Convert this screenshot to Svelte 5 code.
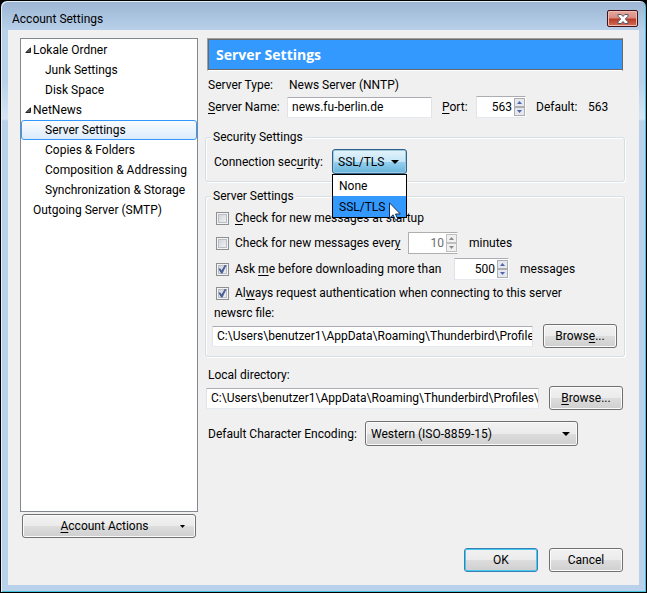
<script>
  let serverName = $state('news.fu-berlin.de');
  let port = $state('563');
  let security = $state('SSL/TLS');
  let interval = $state('10');
  let limit = $state('500');
  let checkStartup = $state(false);
  let checkEvery = $state(false);
  let askBefore = $state(true);
  let alwaysAuth = $state(true);
  let newsrc = $state('C:\\Users\\benutzer1\\AppData\\Roaming\\Thunderbird\\Profiles\\newsrc');
  let directory = $state('C:\\Users\\benutzer1\\AppData\\Roaming\\Thunderbird\\Profiles\\');

  const securityOptions = ['None', 'SSL/TLS'];
  const tree = [
    { label: 'Lokale Ordner', open: true },
    { label: 'Junk Settings', child: true },
    { label: 'Disk Space', child: true },
    { label: 'NetNews', open: true },
    { label: 'Server Settings', child: true },
    { label: 'Copies & Folders', child: true },
    { label: 'Composition & Addressing', child: true },
    { label: 'Synchronization & Storage', child: true },
    { label: 'Outgoing Server (SMTP)' }
  ];
  let current = $state('Server Settings');
</script>

{#snippet steps(name, disabled, step)}
  <span class="steps">
    <button type="button" aria-label={`Increase ${name}`} {disabled} onclick={() => step(1)}>
      <svg viewBox="0 0 5 3"><path d="M0 3h5L2.500 0z" /></svg>
    </button>
    <button type="button" aria-label={`Decrease ${name}`} {disabled} onclick={() => step(-1)}>
      <svg viewBox="0 0 5 3"><path d="M0 0h5L2.500 3z" /></svg>
    </button>
  </span>
{/snippet}

<div class="window">
  <header class="titlebar">
    <span>Account Settings</span>
    <button type="button" class="close" aria-label="Close">
      <svg viewBox="0 0 12 10">
        <path d="M1 .5h3.200L6 2.500 7.800.5H11v1.700L8.300 5 11 7.800v1.700H7.800L6 7.500 4.200 9.500H1V7.800L3.700 5 1 2.200z" />
      </svg>
    </button>
  </header>

  <div class="client">
    <div class="columns">
      <nav class="side">
        <ul class="tree">
          {#each tree as item}
            <li>
              <button
                type="button"
                class:child={item.child}
                class:selected={current === item.label}
                onclick={() => (current = item.label)}
              >
                {#if item.open}
                  <svg class="twisty" viewBox="0 0 6 6"><path d="M5.500.800v4.700H.800z" /></svg>
                {/if}
                {item.label}
              </button>
            </li>
          {/each}
        </ul>
        <button type="button" class="btn actions">
          <span><u>A</u>ccount Actions</span>
          <svg viewBox="0 0 5 3"><path d="M0 0h5L2.500 3z" /></svg>
        </button>
      </nav>

      <main class="panel">
        <h1>Server Settings</h1>

        <div class="line type">
          <span class="key">Server Type:</span>
          <span>News Server (NNTP)</span>
        </div>
        <div class="line name">
          <label class="key" for="server"><u>S</u>erver Name:</label>
          <input id="server" class="field" type="text" bind:value={serverName} />
          <label class="port" for="port"><u>P</u>ort:</label>
          <span class="spin">
            <input id="port" type="text" inputmode="numeric" bind:value={port} />
            {@render steps('port', false, (n) => (port = String(+port + n)))}
          </span>
          <span class="default">Default:</span>
          <span>563</span>
        </div>

        <fieldset class="security">
          <legend>Security Settings</legend>
          <div class="line">
            <label class="connection" for="security">Connection sec<u>u</u>rity:</label>
            <div class="combo hot">
              <select id="security" bind:value={security}>
                {#each securityOptions as option}
                  <option>{option}</option>
                {/each}
              </select>
              <svg viewBox="0 0 8 4"><path d="M0 0h8L4 4z" /></svg>
              <div class="popup" role="listbox" aria-label="Connection security">
                {#each securityOptions as option}
                  <button
                    type="button"
                    role="option"
                    aria-selected={security === option}
                    onclick={() => (security = option)}>{option}</button
                  >
                {/each}
                <svg class="pointer" viewBox="0 0 12 19">
                  <path d="M.5.800v15.400l3.600-3.400 2.400 5.400 2.300-1-2.300-5.200h4.800z" />
                </svg>
              </div>
            </div>
          </div>
        </fieldset>

        <fieldset class="server">
          <legend>Server Settings</legend>
          <div class="line check startup">
            <input id="startup" type="checkbox" bind:checked={checkStartup} />
            <label for="startup"><u>C</u>heck for new messages at startup</label>
          </div>
          <div class="line check">
            <input id="every" type="checkbox" bind:checked={checkEvery} />
            <label class="every" for="every">Check for new messages ever<u>y</u></label>
            <span class="spin" class:off={!checkEvery}>
              <input
                type="text"
                inputmode="numeric"
                aria-label="Minutes between checks"
                disabled={!checkEvery}
                bind:value={interval}
              />
              {@render steps('minutes', !checkEvery, (n) => (interval = String(+interval + n)))}
            </span>
            <span>minutes</span>
          </div>
          <div class="line check">
            <input id="ask" type="checkbox" bind:checked={askBefore} />
            <label class="ask" for="ask">Ask <u>m</u>e before downloading more than</label>
            <span class="spin limit">
              <input
                type="text"
                inputmode="numeric"
                aria-label="Message limit"
                bind:value={limit}
              />
              {@render steps('messages', false, (n) => (limit = String(+limit + n)))}
            </span>
            <span>messages</span>
          </div>
          <div class="line check auth">
            <input id="auth" type="checkbox" bind:checked={alwaysAuth} />
            <label for="auth">Al<u>w</u>ays request authentication when connecting to this server</label>
          </div>
          <label class="caption" for="newsrc">newsrc file:</label>
          <div class="line path">
            <input id="newsrc" class="field" type="text" bind:value={newsrc} />
            <button type="button" class="btn"><span>Brows<u>e</u>...</span></button>
          </div>
        </fieldset>

        <label class="caption local" for="directory">Local directory:</label>
        <div class="line path outer">
          <input id="directory" class="field" type="text" bind:value={directory} />
          <button type="button" class="btn"><span><u>B</u>rowse...</span></button>
        </div>

        <div class="line encoding">
          <label for="charset">Default Character Encoding:</label>
          <div class="combo wide">
            <select id="charset">
              <option>Western (ISO-8859-15)</option>
            </select>
            <svg viewBox="0 0 8 4"><path d="M0 0h8L4 4z" /></svg>
          </div>
        </div>
      </main>
    </div>

    <footer>
      <button type="button" class="btn ok">OK</button>
      <button type="button" class="btn">Cancel</button>
    </footer>
  </div>
</div>

<style>
  :global(body) {
    margin: 0;
    background: #000;
  }

  .window,
  .window * {
    box-sizing: border-box;
  }

  .window {
    display: flex;
    flex-direction: column;
    min-height: 100vh;
    padding: 0 7px 7px;
    border: 1px solid #000;
    border-radius: 7px 7px 0 0;
    background: linear-gradient(#9bb5d3, #b9d1ea 30px, #b9d1ea 80px, #d6e5f5 118px, #b9d1ea 120px);
    box-shadow:
      inset 1px 1px 0 #e4eef8,
      inset -1px -1px 0 #43c3dc;
    color: #000;
    font: 12px/16px Roboto, 'Open Sans', sans-serif;
  }

  button,
  input,
  select {
    margin: 0;
    color: inherit;
    font: inherit;
  }

  u {
    text-underline-offset: 2px;
  }

  svg {
    display: block;
    flex: none;
  }

  .titlebar {
    display: flex;
    align-items: center;
    justify-content: space-between;
    height: 29px;
    padding: 6px 1px 0 4px;
  }

  .close {
    display: grid;
    place-items: center;
    width: 31px;
    height: 17px;
    padding: 0;
    border: 1px solid #43131b;
    border-radius: 2px;
    background: linear-gradient(#e6a99f, #d98b80 7px, #b93a24 8px, #d2705c);
    box-shadow: inset 0 0 0 1px #f0bdb4;
  }

  .close svg {
    width: 12px;
    height: 10px;
    fill: #fff;
    stroke: #535666;
  }

  .client {
    display: flex;
    flex: 1;
    flex-direction: column;
    padding: 8px 14px 13px 12px;
    background: #f0f0f0;
  }

  .columns {
    display: flex;
    flex: 1;
    gap: 7px;
  }

  .side {
    display: flex;
    flex: none;
    flex-direction: column;
    width: 178px;
  }

  .tree {
    flex: 1;
    margin: 0 0 2px;
    padding: 1px 0;
    border: 1px solid #828790;
    background: #fff;
    list-style: none;
  }

  .tree button {
    display: flex;
    align-items: center;
    width: 100%;
    height: 20px;
    padding: 0 0 0 11px;
    border: 1px solid transparent;
    border-radius: 3px;
    background: none;
    text-align: left;
    white-space: nowrap;
  }

  .tree button.child {
    padding-left: 23px;
  }

  .tree button.selected {
    border-color: #3399ff;
    background: linear-gradient(#fafcff, #dcebfc);
  }

  .tree .twisty {
    width: 6px;
    height: 6px;
    margin: 0 2px 0 -8px;
    fill: #595959;
    stroke: #262626;
    stroke-width: 1px;
  }

  .btn {
    display: flex;
    flex: none;
    align-items: center;
    justify-content: center;
    width: 74px;
    height: 24px;
    padding: 0 6px;
    border: 1px solid #707070;
    border-radius: 3px;
    background: linear-gradient(#f2f2f2, #ebebeb 50%, #dddddd 50%, #cfcfcf);
    box-shadow: inset 0 0 0 1px #fbfbfb;
  }

  .btn.ok {
    border-color: #3c7fb1;
    box-shadow: inset 0 0 0 1px #48c8f0;
  }

  .btn.actions {
    width: auto;
    margin: 0 2px;
    padding-right: 10px;
  }

  .actions span {
    flex: 1;
  }

  .actions svg {
    width: 5px;
    height: 3px;
  }

  .panel {
    flex: 1;
    min-width: 0;
  }

  h1 {
    height: 33px;
    margin: 0 2px;
    padding: 0 8px;
    border: 1px solid;
    border-color: #a0a0a0 #696969 #fff #a0a0a0;
    background: #3399ff;
    box-shadow:
      inset 1px 1px 0 #696969,
      inset 0 -1px 0 #696969;
    color: #fff;
    font-family: 'Open Sans', 'Noto Sans', sans-serif;
    font-size: 14px;
    font-weight: 700;
    line-height: 32px;
  }

  .line {
    display: flex;
    align-items: center;
    white-space: nowrap;
  }

  .key {
    width: 81px;
  }

  .type {
    height: 18px;
    margin: 5px 3px 2px;
  }

  .name {
    height: 22px;
    margin: 0 3px;
  }

  .name .key {
    width: 79px;
  }

  .name .field {
    width: 145px;
  }

  .port {
    width: 44px;
    padding-left: 10px;
  }

  .default {
    width: 62px;
    padding-left: 10px;
  }

  .field {
    min-width: 0;
    height: 21px;
    padding: 0 0 0 4px;
    border: 1px solid;
    border-color: #abadb3 #e2e3ea #e3e9ef #e2e3ea;
    border-radius: 1px;
    background: #fff;
  }

  .spin {
    display: flex;
    flex: none;
    width: 50px;
    height: 22px;
    padding: 1px 0 1px 1px;
    border: 1px solid;
    border-color: #abadb3 #fff #e3e9ef #e2e3ea;
    background: #fff;
  }

  .spin.limit {
    width: 55px;
  }

  .spin input {
    flex: 1;
    min-width: 0;
    padding: 0 2px;
    border: 0;
    background: none;
    text-align: right;
  }

  .steps {
    display: flex;
    flex: none;
    flex-direction: column;
    width: 11px;
  }

  .steps button {
    display: grid;
    flex: 1;
    place-items: center;
    min-height: 0;
    padding: 0;
    border: 1px solid #abadb3;
    background: #e6e8ee;
  }

  .steps svg {
    width: 5px;
    height: 3px;
    fill: #4a66b0;
  }

  .spin.off {
    border-color: #afafaf #f4f4f4 #afafaf #afafaf;
    color: #6d6d6d;
  }

  .off .steps svg {
    fill: #8a8a8a;
  }

  .off .steps button {
    border-color: #bfbfbf;
    background: #f0f0f0;
  }

  fieldset {
    min-width: 0;
    margin: 0;
    border: 1px solid #d5dfe5;
    border-radius: 3px;
  }

  legend {
    height: 16px;
    padding: 0 2px;
  }

  .security {
    margin-top: 11px;
    padding: 4px 8px 7px;
  }

  .security legend {
    margin-left: -3px;
  }

  .connection {
    width: 118px;
  }

  .combo {
    position: relative;
    display: flex;
    align-items: center;
    width: 75px;
    height: 25px;
    border: 1px solid #707070;
    border-radius: 3px;
    background: linear-gradient(#f2f2f2, #ebebeb 50%, #dddddd 50%, #cfcfcf);
    box-shadow: inset 0 0 0 1px #fbfbfb;
  }

  .combo select {
    flex: 1;
    min-width: 0;
    height: 100%;
    padding: 0 0 0 5px;
    border: 0;
    outline: 0;
    background: none;
    appearance: none;
  }

  .combo > svg {
    width: 8px;
    height: 4px;
    margin-right: 7px;
  }

  .combo.hot {
    border-color: #2c628b;
    background: linear-gradient(#e5f4fc, #c4e5f6 50%, #98d1ef 50%, #68b3db);
    box-shadow: inset 0 0 0 1px #9fc9e0;
  }

  .combo.wide {
    width: 213px;
  }

  .popup {
    position: absolute;
    z-index: 2;
    top: 24px;
    right: -1px;
    left: -1px;
    border: 1px solid #000;
    background: #fff;
  }

  .popup button {
    display: block;
    width: 100%;
    height: 21px;
    padding: 0 6px;
    border: 0;
    background: #fff;
    text-align: left;
  }

  .popup button[aria-selected='true'] {
    background: #3399ff;
  }

  .pointer {
    position: absolute;
    top: 27px;
    left: 56px;
    width: 12px;
    height: 19px;
    fill: #fff;
    stroke: #1c2f52;
    stroke-width: 1px;
    pointer-events: none;
  }

  .server {
    margin-top: 6px;
    padding: 2px 7px 8px 6px;
  }

  .server legend {
    margin-left: -1px;
  }

  .check {
    height: 26px;
    padding-left: 4px;
  }

  .check.startup {
    height: 24px;
  }

  .check.auth {
    height: 22px;
  }

  .check label {
    padding-left: 6px;
  }

  .check .every {
    width: 179px;
  }

  .check .ask {
    width: 225px;
  }

  .check .spin {
    margin-right: 11px;
  }

  input[type='checkbox'] {
    display: grid;
    flex: none;
    place-items: center;
    width: 13px;
    height: 13px;
    border: 1px solid #8e8f8f;
    background: linear-gradient(135deg, #cbcfd5, #f6f6f6);
    box-shadow:
      inset 0 0 0 1px #f4f4f4,
      inset 0 0 0 2px #b9bec6;
    appearance: none;
  }

  input[type='checkbox']:checked::before {
    width: 9px;
    height: 9px;
    background: #4a5f97;
    clip-path: polygon(5% 50%, 22% 42%, 40% 65%, 78% 0, 98% 0, 50% 100%, 35% 100%);
    content: '';
  }

  .caption {
    display: block;
    height: 18px;
    margin: 0 2px 2px;
    line-height: 18px;
  }

  .caption.local {
    margin: 9px 3px 2px;
  }

  .path {
    gap: 10px;
  }

  .path .field {
    flex: 1;
  }

  .path.outer {
    margin: 0 2px 11px 1px;
  }

  .encoding {
    margin: 0 3px;
  }

  .encoding label {
    width: 157px;
  }

  footer {
    display: flex;
    justify-content: flex-end;
    gap: 11px;
    margin: 10px 2px 0 0;
  }

  fieldset {
    box-shadow:
      inset 1px 1px 0 #fff,
      1px 1px 0 #fff;
  }

  legend {
    background: #f0f0f0;
  }
</style>
